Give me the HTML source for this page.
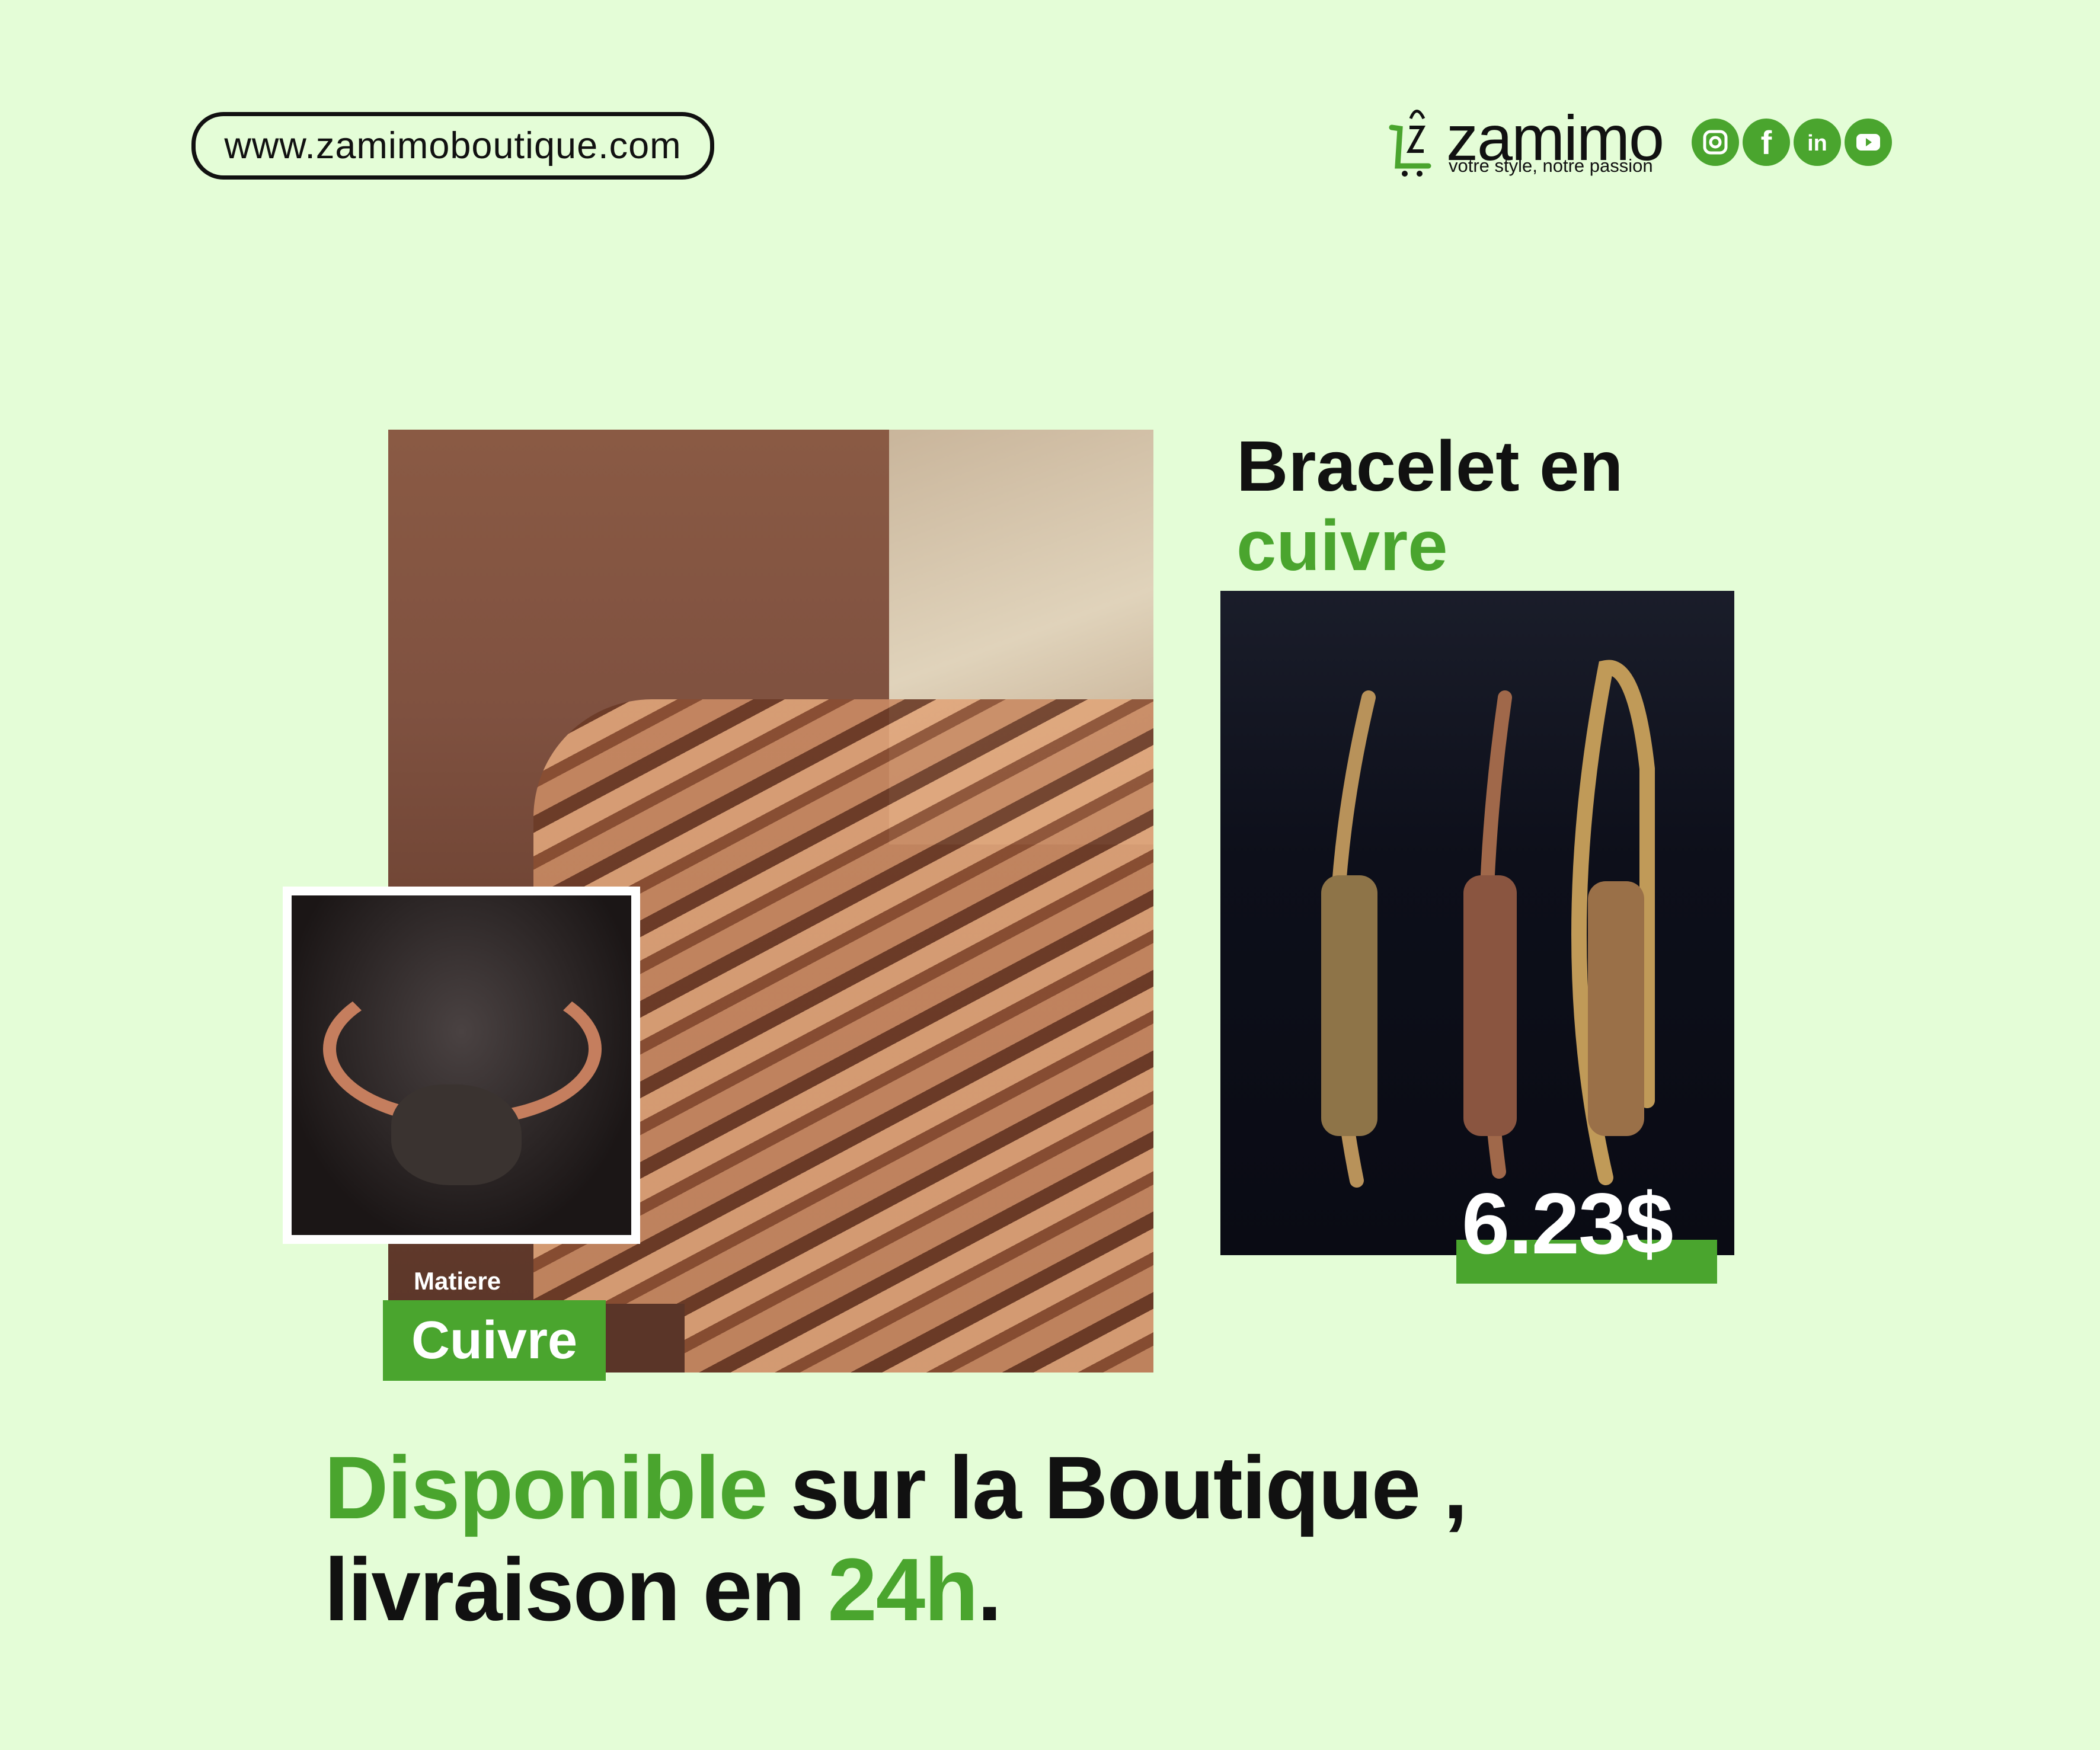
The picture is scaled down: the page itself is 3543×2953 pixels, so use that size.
<!DOCTYPE html>
<html><head><meta charset="utf-8"><style>
html,body{margin:0;padding:0}
body{width:3543px;height:2953px;background:#e4fdd7;position:relative;overflow:hidden;font-family:"Liberation Sans",sans-serif}
.a{position:absolute}
.g{color:#4aa52e}
</style></head><body>
<div class="a" style="left:323px;top:189px;width:868px;height:100px;border:7px solid #111;border-radius:54px;box-sizing:content-box"></div>
<div class="a" style="left:323px;top:189px;width:882px;height:114px;line-height:114px;text-align:center;font-size:63px;color:#111;letter-spacing:1px">www.zamimoboutique.com</div>

<!-- logo -->
<svg class="a" style="left:2340px;top:175px" width="90" height="125" viewBox="0 0 90 125">
<path d="M8 40 L22 42 L18 105 L70 105" fill="none" stroke="#4aa52e" stroke-width="9" stroke-linecap="round"/>
<path d="M40 25 Q50 0 62 25" fill="none" stroke="#111" stroke-width="5"/>
<path d="M38 40 L60 40 L38 80 L62 80" fill="none" stroke="#111" stroke-width="6"/>
<circle cx="30" cy="118" r="5" fill="#111"/><circle cx="55" cy="118" r="5" fill="#111"/>
</svg>
<div class="a" style="left:2440px;top:168px;font-size:108px;color:#111;letter-spacing:-2px;line-height:130px">zamimo</div>
<div class="a" style="left:2444px;top:260px;font-size:31px;color:#111;line-height:40px">votre style, notre passion</div>
<svg class="a" style="left:2852px;top:198px" width="350" height="84" viewBox="0 0 350 84">
<g fill="#4aa52e"><circle cx="42" cy="42" r="40"/><circle cx="128" cy="42" r="40"/><circle cx="214" cy="42" r="40"/><circle cx="300" cy="42" r="40"/></g>
<rect x="24" y="24" width="36" height="36" rx="10" fill="none" stroke="#fff" stroke-width="5"/><circle cx="42" cy="42" r="8" fill="none" stroke="#fff" stroke-width="5"/>
<text x="128" y="62" font-size="56" font-weight="bold" fill="#fff" text-anchor="middle" font-family="Liberation Sans">f</text>
<text x="214" y="56" font-size="38" font-weight="bold" fill="#fff" text-anchor="middle" font-family="Liberation Sans">in</text>
<rect x="280" y="28" width="40" height="28" rx="8" fill="#fff"/><path d="M296 35 L306 42 L296 49Z" fill="#4aa52e"/>
</svg>

<!-- main photo -->
<div class="a" style="left:655px;top:725px;width:1291px;height:1591px;background:linear-gradient(180deg,#8a5a44 0%,#7f5140 30%,#6a4030 60%,#5a3528 100%)"></div>
<div class="a" style="left:1500px;top:725px;width:446px;height:700px;background:linear-gradient(160deg,#c9b59b,#e0d3bb 50%,#b89d80)"></div>
<div class="a" style="left:900px;top:1180px;width:1046px;height:1136px;background:repeating-linear-gradient(-28deg,#c98a63 0 40px,#8a4e32 40px 60px,#e0a57a 60px 95px,#6b3a26 95px 120px);opacity:.9;border-radius:200px 0 0 0"></div>
<div class="a" style="left:655px;top:2200px;width:500px;height:116px;background:#5a3528"></div>

<!-- inset -->
<div class="a" style="left:477px;top:1496px;width:603px;height:603px;background:#fff"></div>
<div class="a" style="left:492px;top:1511px;width:573px;height:573px;background:radial-gradient(ellipse at 50% 40%,#4a4242,#1b1616 75%)"></div>
<div class="a" style="left:545px;top:1640px;width:470px;height:260px;border:22px solid #c57e5e;border-top-color:transparent;border-radius:50%;box-sizing:border-box"></div>
<div class="a" style="left:660px;top:1830px;width:220px;height:170px;background:#3a3330;border-radius:40% 50% 40% 45%"></div>

<div class="a" style="left:698px;top:2138px;font-size:42px;font-weight:bold;color:#fff">Matiere</div>
<div class="a" style="left:646px;top:2194px;width:376px;height:136px;background:#4aa52e"></div>
<div class="a" style="left:646px;top:2194px;width:376px;height:136px;line-height:136px;text-align:center;font-size:90px;font-weight:bold;color:#fff">Cuivre</div>

<!-- title -->
<div class="a" style="left:2086px;top:716px;font-size:121px;font-weight:bold;color:#111;line-height:140px">Bracelet en</div>
<div class="a g" style="left:2086px;top:850px;font-size:121px;font-weight:bold;line-height:140px">cuivre</div>

<!-- right photo -->
<div class="a" style="left:2059px;top:997px;width:867px;height:1121px;background:linear-gradient(180deg,#1a1d2a 0%,#0d0f1a 40%,#0a0b14 100%)"></div>
<svg class="a" style="left:2059px;top:997px" width="867" height="1121" viewBox="0 0 867 1121">
<g fill="none" stroke-linecap="round">
<path d="M230 995 Q150 600 250 180" stroke="#b8925a" stroke-width="24"/>
<path d="M470 980 Q420 600 480 180" stroke="#a0684a" stroke-width="24"/>
<path d="M650 990 Q560 600 650 130 Q700 120 720 300 L720 860" stroke="#c09a58" stroke-width="26"/>
</g>
<rect x="170" y="480" width="95" height="440" rx="30" fill="#8e7448"/>
<rect x="410" y="480" width="90" height="440" rx="30" fill="#8a5540"/>
<rect x="620" y="490" width="95" height="430" rx="30" fill="#9a7048"/>
</svg>

<div class="a" style="left:2457px;top:2092px;width:440px;height:74px;background:#4aa52e"></div>
<div class="a" style="left:2466px;top:1985px;font-size:146px;font-weight:bold;color:#fff;line-height:160px;letter-spacing:-2px">6.23$</div>

<!-- bottom -->
<div class="a" style="left:547px;top:2420px;font-size:150px;font-weight:bold;color:#111;line-height:180px;white-space:nowrap;letter-spacing:-2px"><span class="g">Disponible</span> sur la Boutique ,</div>
<div class="a" style="left:547px;top:2592px;font-size:150px;font-weight:bold;color:#111;line-height:180px;white-space:nowrap;letter-spacing:-2px">livraison en <span class="g">24h</span>.</div>
</body></html>
